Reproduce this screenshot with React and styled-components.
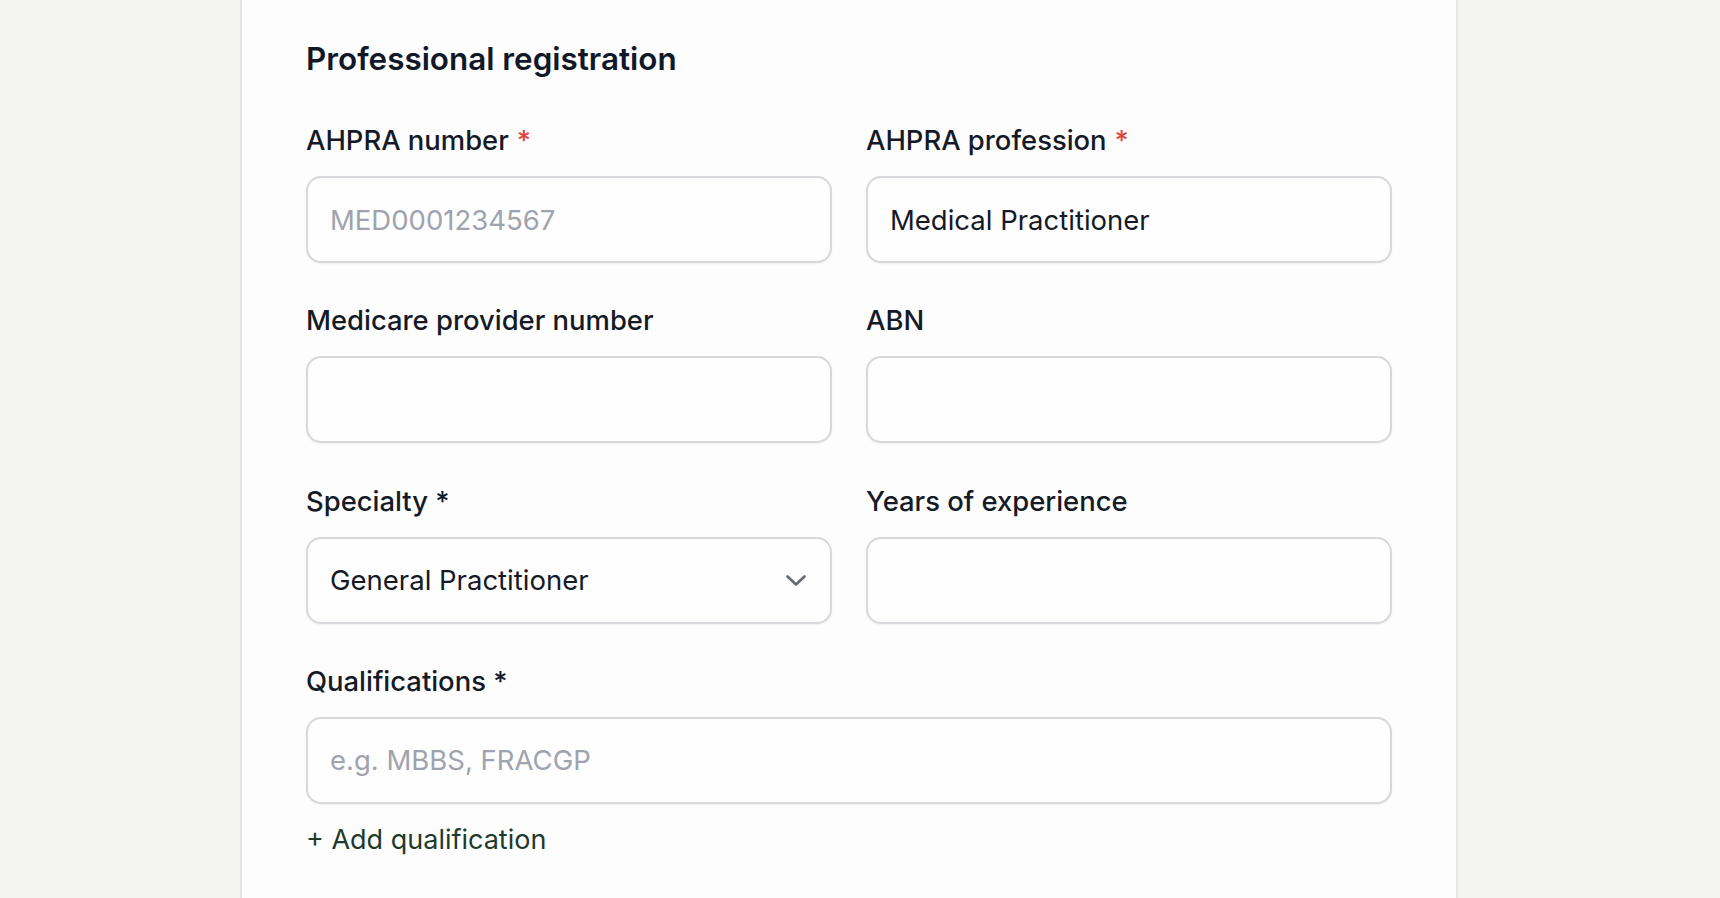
import React from "react";
import styled, { createGlobalStyle } from "styled-components";

const GlobalStyle = createGlobalStyle`
  html, body {
    margin: 0;
    padding: 0;
    background: #f3f4f2;
  }
  body {
    font-family: Inter, "Noto Sans", "Liberation Sans", sans-serif;
    -webkit-font-smoothing: antialiased;
  }
  * {
    box-sizing: border-box;
  }
`;

const Page = styled.div`
  display: flex;
  justify-content: center;
  min-height: 100vh;
  padding-right: 22px;
  background: #f3f4f2;
`;

const Card = styled.section`
  width: 1218px;
  padding: 40px 64px 60px;
  background: #fdfdfd;
  border-left: 2px solid #e6e7e5;
  border-right: 2px solid #e6e7e5;
`;

const Heading = styled.h2`
  margin: 0 0 46px;
  font-size: 31.4px;
  line-height: 38px;
  font-weight: 600;
  color: #111827;
`;

const Grid = styled.div`
  display: grid;
  grid-template-columns: 1fr 1fr;
  column-gap: 34px;
  row-gap: 41.3px;
`;

const Field = styled.div`
  display: flex;
  flex-direction: column;
  grid-column: ${(p) => (p.$wide ? "1 / -1" : "auto")};
`;

const Label = styled.label`
  margin-bottom: 20px;
  font-size: 27.4px;
  line-height: 32px;
  font-weight: 500;
  color: #141a26;
`;

const Required = styled.span`
  margin-left: 8px;
  color: ${(p) => (p.$plain ? "#141a26" : "#e0473f")};
`;

const Input = styled.input`
  height: 87px;
  width: 100%;
  padding: 0 22px;
  border: 2px solid #d7d8dc;
  border-radius: 15px;
  background: #fefefe;
  box-shadow: 0 1px 2px rgba(16, 24, 40, 0.06);
  font-family: inherit;
  font-size: 27.5px;
  color: #141a26;
  outline: none;

  &::placeholder {
    color: #9ea3ad;
  }
`;

const SelectBox = styled.div`
  display: flex;
  align-items: center;
  justify-content: space-between;
  height: 87px;
  padding: 0 24px 0 22px;
  border: 2px solid #d7d8dc;
  border-radius: 15px;
  background: #fefefe;
  box-shadow: 0 1px 2px rgba(16, 24, 40, 0.06);
  font-size: 27.5px;
  color: #141a26;
  cursor: pointer;
`;

const AddLink = styled.button`
  align-self: flex-start;
  margin-top: 18px;
  padding: 0;
  border: none;
  background: none;
  font-family: inherit;
  font-size: 27px;
  line-height: 36px;
  font-weight: 400;
  color: #1d3a2b;
  cursor: pointer;
`;

const Chevron = () => (
  <svg width="20" height="11" viewBox="0 0 20 11" fill="none">
    <path
      d="M1.5 1.5L10 9.5L18.5 1.5"
      stroke="#656875"
      strokeWidth="2.6"
      strokeLinecap="round"
      strokeLinejoin="round"
    />
  </svg>
);

const App = () => {
  return (
    <Page>
      <GlobalStyle />
      <Card>
        <Heading>Professional registration</Heading>
        <Grid>
          <Field>
            <Label>
              AHPRA number<Required>*</Required>
            </Label>
            <Input placeholder="MED0001234567" />
          </Field>
          <Field>
            <Label>
              AHPRA profession<Required>*</Required>
            </Label>
            <Input defaultValue="Medical Practitioner" />
          </Field>
          <Field>
            <Label>Medicare provider number</Label>
            <Input />
          </Field>
          <Field>
            <Label>ABN</Label>
            <Input />
          </Field>
          <Field>
            <Label>Specialty *</Label>
            <SelectBox>
              <span>General Practitioner</span>
              <Chevron />
            </SelectBox>
          </Field>
          <Field>
            <Label>Years of experience</Label>
            <Input />
          </Field>
          <Field $wide>
            <Label>Qualifications *</Label>
            <Input placeholder="e.g. MBBS, FRACGP" />
            <AddLink>+ Add qualification</AddLink>
          </Field>
        </Grid>
      </Card>
    </Page>
  );
};

export default App;
